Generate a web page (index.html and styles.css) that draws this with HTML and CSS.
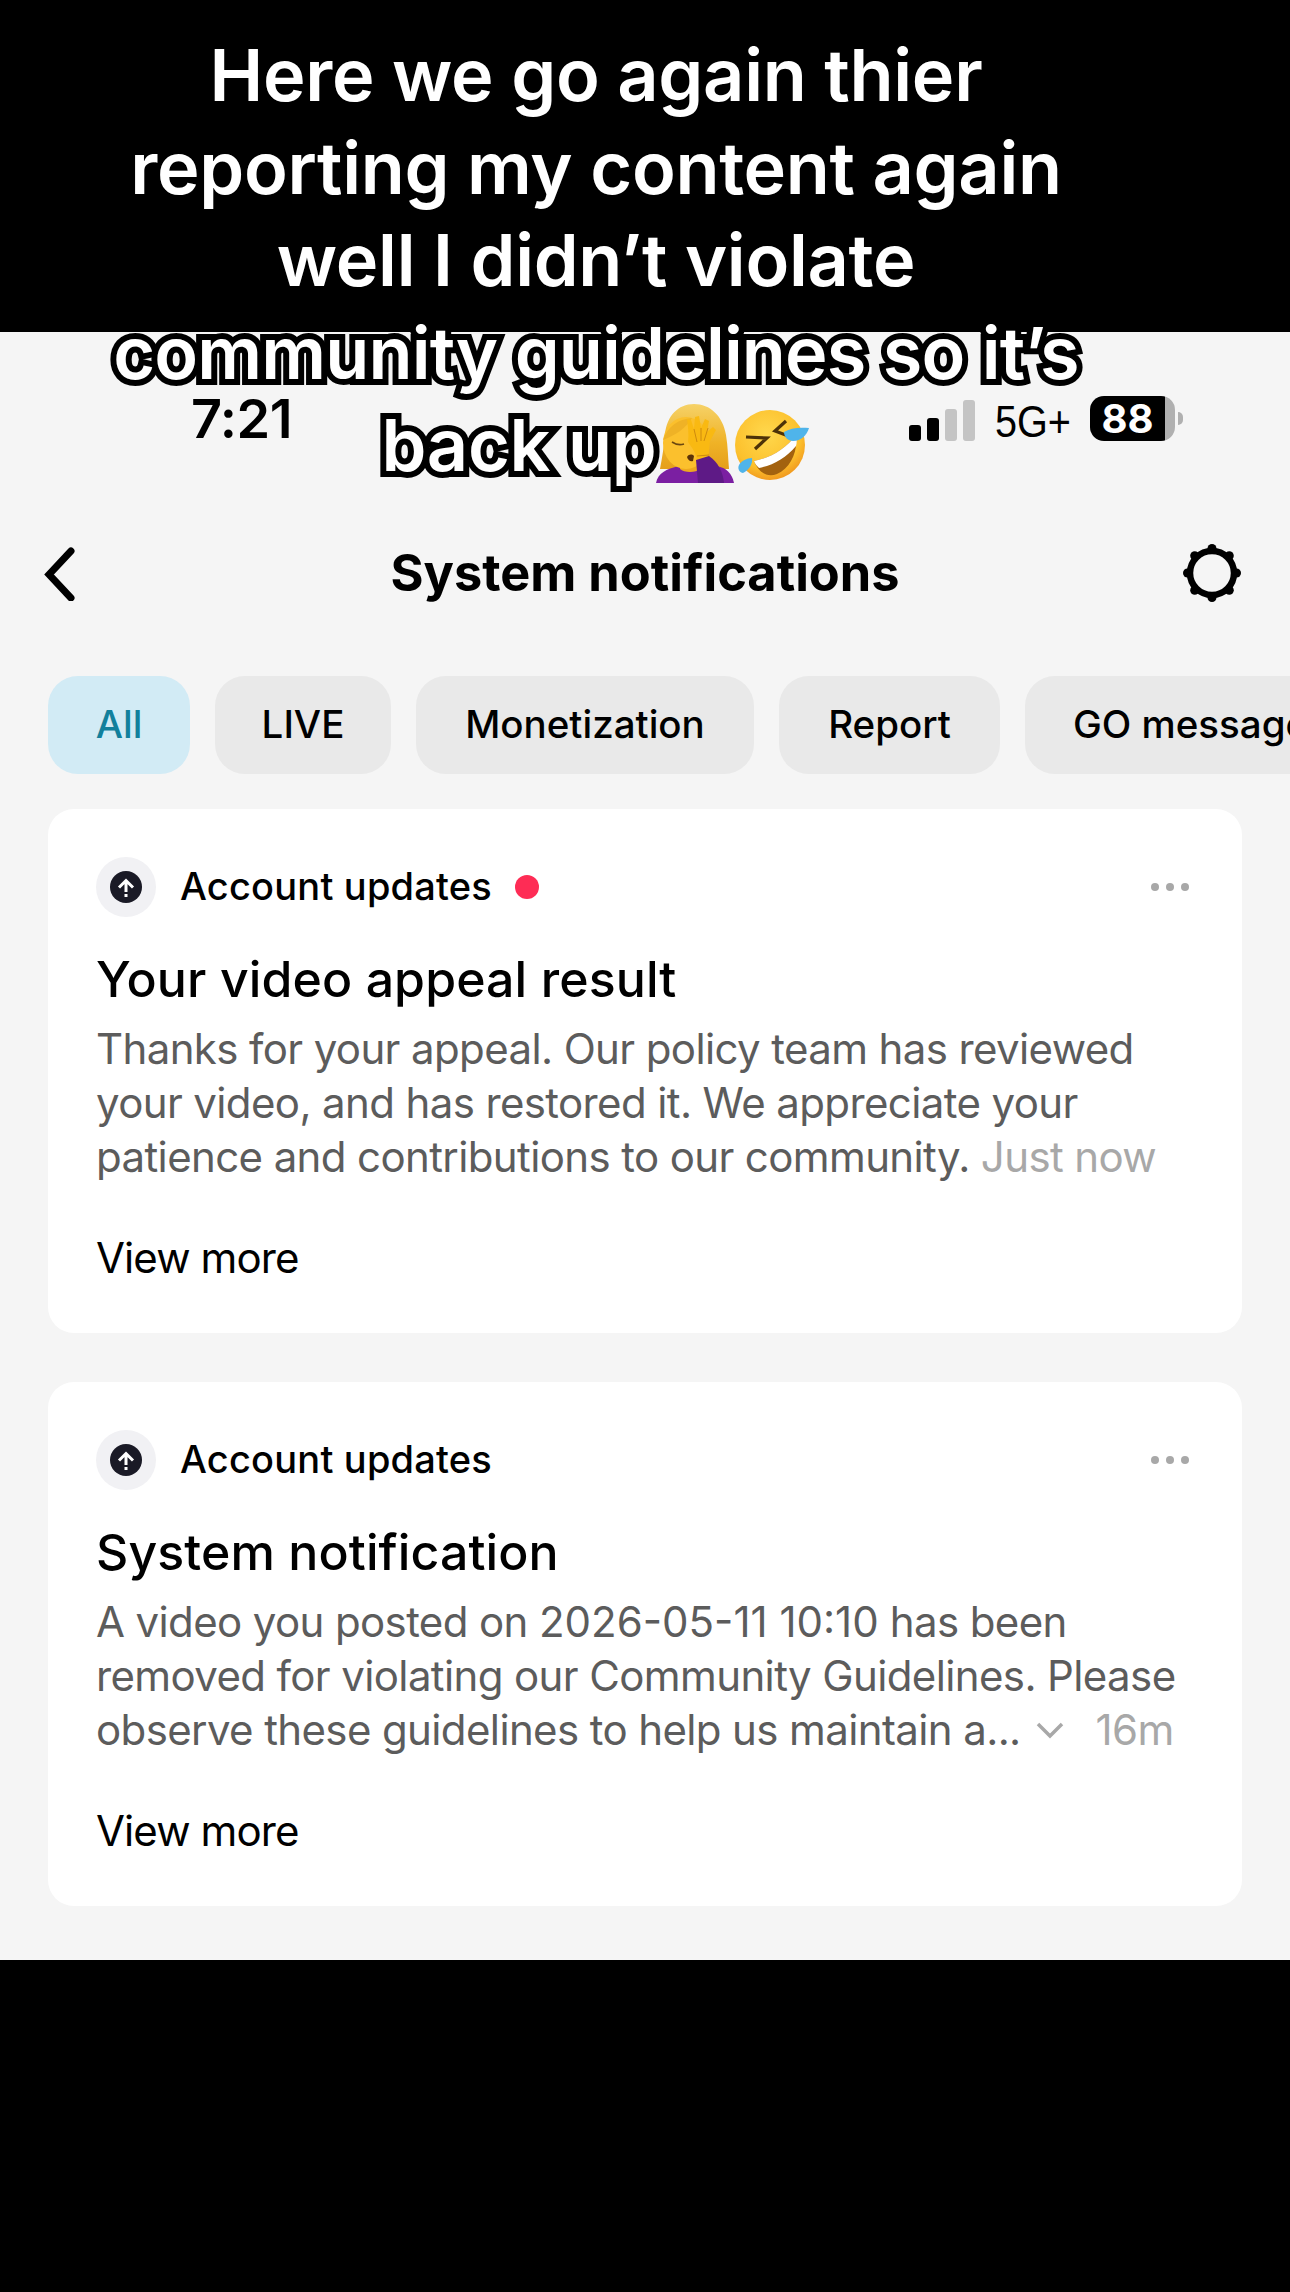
FILE: index.html
```html
<!DOCTYPE html>
<html lang="en">
<head>
<meta charset="utf-8">
<title>System notifications</title>
<link rel="stylesheet" href="styles.css">
</head>
<body>
<div class="page">
  <div class="band-top"></div>
  <main class="screen">
    <div class="status">
      <span class="time">7:21</span>
      <div class="status-right">
        <div class="signal"><i class="bar b1"></i><i class="bar b2"></i><i class="bar b3 off"></i><i class="bar b4 off"></i></div>
        <span class="net">5G+</span>
        <div class="battery"><div class="batt-body"><span class="batt-num">88</span></div><i class="batt-nub"></i></div>
      </div>
    </div>
    <header class="nav">
      <svg class="back" width="40" height="56" viewBox="0 0 40 56"><path d="M31 6 9 29.5 31 53" fill="none" stroke="#000" stroke-width="7" stroke-linecap="round"/></svg>
      <h1 class="nav-title">System notifications</h1>
      <svg class="gear" width="60" height="60" viewBox="0 0 60 60">
        <circle cx="30" cy="30" r="22" fill="none" stroke="#000" stroke-width="6.5"/>
        <g fill="#000">
          <circle cx="30" cy="5.5" r="4.5"/><circle cx="47.3" cy="12.7" r="4.5"/><circle cx="54.5" cy="30" r="4.5"/><circle cx="47.3" cy="47.3" r="4.5"/><circle cx="30" cy="54.5" r="4.5"/><circle cx="12.7" cy="47.3" r="4.5"/><circle cx="5.5" cy="30" r="4.5"/><circle cx="12.7" cy="12.7" r="4.5"/>
        </g>
      </svg>
    </header>
    <nav class="tabs">
      <span class="tab tab-on tab-all">All</span>
      <span class="tab tab-live">LIVE</span>
      <span class="tab tab-money">Monetization</span>
      <span class="tab tab-report">Report</span>
      <span class="tab tab-clip">GO messages</span>
    </nav>
    <section class="cards">
      <article class="card">
        <div class="card-head">
          <span class="avatar"><svg width="32" height="32" viewBox="0 0 32 32"><circle cx="16" cy="16" r="16" fill="#1a1a26"/><path d="M16 21V10M9 16.5l7-7 7 7" fill="none" stroke="#fff" stroke-width="3"/><rect x="14.5" y="23" width="3" height="3" fill="#fff"/></svg></span>
          <span class="source">Account updates</span>
          <i class="unread"></i>
          <span class="more"><i></i><i></i><i></i></span>
        </div>
        <h2 class="card-title">Your video appeal result</h2>
        <p class="card-body">Thanks for your appeal. Our policy team has reviewed<br>your video, and has restored it. We appreciate your<br>patience and contributions to our community. <span class="stamp">Just now</span></p>
        <a class="view">View more</a>
      </article>
      <article class="card">
        <div class="card-head">
          <span class="avatar"><svg width="32" height="32" viewBox="0 0 32 32"><circle cx="16" cy="16" r="16" fill="#1a1a26"/><path d="M16 21V10M9 16.5l7-7 7 7" fill="none" stroke="#fff" stroke-width="3"/><rect x="14.5" y="23" width="3" height="3" fill="#fff"/></svg></span>
          <span class="source">Account updates</span>
          <span class="more"><i></i><i></i><i></i></span>
        </div>
        <h2 class="card-title">System notification</h2>
        <p class="card-body">A video you posted on <span class="nums">2026-05-11 10:10</span> has been<br>removed for violating our Community Guidelines. Please<br><span class="last-line"><span>observe these guidelines to help us maintain a...</span><svg class="caret" width="28" height="18" viewBox="0 0 28 18"><path d="M2 3l12 12L26 3" fill="none" stroke="#a8a8a8" stroke-width="3.5"/></svg><span class="stamp">16m</span></span></p>
        <a class="view">View more</a>
      </article>
    </section>
  </main>
  <div class="band-bottom"></div>
  <div class="caption">Here we go again thier<br>reporting my content again<br>well I didn’t violate<br><span class="tight">community guidelines so it’s</span><br>back up<svg class="emoji emoji-woman" width="78" height="80" viewBox="0 0 78 80">
      <defs><linearGradient id="hair" x1="0" y1="0" x2="0" y2="1"><stop offset="0" stop-color="#f6d268"/><stop offset="0.6" stop-color="#efb226"/><stop offset="1" stop-color="#e59f1c"/></linearGradient></defs>
      <path d="M38 0C22 0 11 12 9 30c-1 13-3 24-5 35h69c-1-11-1-22-3-34C67 12 54 0 38 0z" fill="url(#hair)"/>
      <path d="M0 79c2-10 10-14 23-17h38c9 2 15 7 17 17z" fill="#7b1fa2"/>
      <path d="M24 56h20v9c-4 4-16 4-20 0z" fill="#eea91f"/>
      <ellipse cx="30" cy="39" rx="23" ry="26" fill="#fbc02d"/>
      <path d="M7 36C12 22 22 15 36 14 30 24 20 31 7 36z" fill="#efb226"/>
      <path d="M31 15l4 1 3 9 1-12 4-1 2 12 4-9 4 2-2 11 6-5 3 3-6 11-2 20H41c-1-10-6-14-9-19 1-8 0-15-1-23z" fill="#f9b912"/>
      <path d="M38 25l3 13M45 24l0 13M52 24l-4 13M41 52l12-1" stroke="#cd8a0e" stroke-width="1" fill="none"/>
      <path d="M40 56l13-4c9 6 14 16 15 27H42z" fill="#5e1a86"/>
      <path d="M16 38q6 4 12 2" stroke="#6b4710" stroke-width="1.6" fill="none"/>
      <path d="M31 53c2-3 5-3 7-1l-1 5c-3 1-5-1-6-4z" fill="#5b3208"/>
    </svg><svg class="emoji emoji-rofl" width="76" height="74" viewBox="0 0 76 74">
      <defs><radialGradient id="rofl" cx="45%" cy="35%" r="70%"><stop offset="0" stop-color="#ffd84d"/><stop offset="0.7" stop-color="#fcc02c"/><stop offset="1" stop-color="#ee8f1c"/></radialGradient></defs>
      <circle cx="36" cy="37" r="35" fill="url(#rofl)"/>
      <path d="M20 53C36 50 52 41 62 27c2 18-6 33-19 39-10 4-19-2-23-13z" fill="#a3620f"/>
      <path d="M20 53C36 50 52 41 62 27c1 4 1 8 0 11-10 12-22 19-37 22-2-2-4-4-5-7z" fill="#fff"/>
      <path d="M12 29l21 1-12 11" fill="none" stroke="#4d3208" stroke-width="3.2"/>
      <path d="M52 13L41 23l16 6" fill="none" stroke="#4d3208" stroke-width="3.2"/>
      <path d="M50 24c6-4 15-5 25-4-2 7-8 13-16 13-5 0-9-4-9-9z" fill="#4fb4ea"/>
      <path d="M18 50c1 6-3 12-9 15-3 0-6-4-4-8 2-4 8-7 13-7z" fill="#4fb4ea"/>
    </svg></div>
</div>
</body>
</html>
```
FILE: styles.css
```css
* { box-sizing: border-box; }
html, body { margin: 0; padding: 0; background: #000; }
body { font-family: Inter, "Liberation Sans", sans-serif; color: #000; }
.page { position: relative; width: 1290px; height: 2292px; overflow: hidden; display: flex; flex-direction: column; }
.band-top { height: 332px; background: #000; flex: none; }
.band-bottom { flex: 1; background: #000; }
.screen { height: 1628px; flex: none; background: #f5f5f5; overflow: hidden; }

.status { margin-top: 64px; height: 45px; padding: 0 107px 0 191px; display: flex; align-items: center; justify-content: space-between; }
.time { font-size: 54px; font-weight: 600; line-height: 45px; letter-spacing: -0.5px; }
.status-right { display: flex; align-items: center; }
.signal { display: flex; align-items: flex-end; gap: 6px; height: 41px; margin-right: 20px; margin-top: 4px; }
.bar { display: block; width: 12px; border-radius: 3px; background: #000; }
.b1 { height: 16px; }
.b2 { height: 23px; }
.b3 { height: 32px; }
.b4 { height: 41px; }
.off { background: #c4c4c4; }
.net { font-family: "Liberation Sans", sans-serif; font-size: 44px; line-height: 45px; width: 95px; margin-top: 5px; transform: scaleX(0.9); transform-origin: left center; }
.battery { display: flex; align-items: center; }
.batt-body { width: 85px; height: 45px; border-radius: 14px; background: linear-gradient(to right, #000 75px, #b0b0b0 75px); padding-right: 10px; display: flex; align-items: center; justify-content: center; }
.batt-num { color: #fff; font-size: 40px; font-weight: 700; line-height: 45px; }
.batt-nub { display: block; width: 5px; height: 13px; margin-left: 3px; background: #b0b0b0; border-radius: 0 6px 6px 0; }

.nav { margin-top: 82px; height: 100px; padding: 0 48px 0 40px; display: flex; align-items: center; justify-content: space-between; position: relative; }
.nav-title { position: absolute; left: 0; right: 0; margin: 0; text-align: center; font-size: 50.5px; font-weight: 700; line-height: 100px; }
.back, .gear { position: relative; }

.tabs { margin-top: 53px; height: 98px; padding-left: 48px; display: flex; gap: 25px; overflow: hidden; }
.tab { flex: none; height: 98px; border-radius: 30px; background: #e9e9e9; font-size: 38.5px; font-weight: 500; line-height: 96px; text-align: center; white-space: nowrap; }
.tab-on { background: #d2ebf5; color: #12809c; }
.tab-all { width: 142px; }
.tab-live { width: 176px; }
.tab-money { width: 338px; }
.tab-report { width: 221px; }
.tab-clip { padding-left: 48px; width: 300px; text-align: left; }

.cards { margin-top: 35px; padding: 0 48px; display: flex; flex-direction: column; gap: 49px; }
.card { height: 524px; padding: 48px 48px 0; background: #fff; border-radius: 26px; }
.card-head { display: flex; align-items: center; height: 60px; }
.avatar { width: 60px; height: 60px; border-radius: 50%; background: #f1f1f4; display: flex; align-items: center; justify-content: center; flex: none; }
.source { margin-left: 24px; padding-bottom: 2px; font-size: 38px; font-weight: 500; line-height: 58px; letter-spacing: 0.2px; }
.unread { display: block; width: 24px; height: 24px; margin-left: 23px; border-radius: 50%; background: #fe2c55; }
.more { margin-left: auto; margin-right: 5px; display: flex; gap: 7px; }
.more i { display: block; width: 8px; height: 8px; border-radius: 50%; background: #a8a8a8; }
.card-title { margin: 33px 0 12px; font-size: 50px; font-weight: 500; line-height: 59px; letter-spacing: 0.1px; }
.card-body { margin: 0; padding-top: 1px; font-size: 42px; line-height: 54px; color: #5c5c5c; white-space: nowrap; letter-spacing: -0.62px; }
.nums { letter-spacing: 0; }
.stamp { color: #a8a8a8; }
.last-line { display: flex; align-items: center; }
.caret { margin: 0 32px 0 15px; flex: none; }
.view { display: block; margin-top: 47px; font-size: 42px; line-height: 54px; color: #000; letter-spacing: -0.9px; }

.caption { position: absolute; left: 0; top: 29px; width: 1192px; text-align: center; color: #fff; font-size: 72px; font-weight: 600; line-height: 92.5px; letter-spacing: -0.3px; white-space: nowrap; -webkit-text-stroke: 12px #000; paint-order: stroke fill; }
.tight { letter-spacing: -0.85px; }
.emoji-woman { vertical-align: -13px; }
.emoji-rofl { vertical-align: -11px; }
```
